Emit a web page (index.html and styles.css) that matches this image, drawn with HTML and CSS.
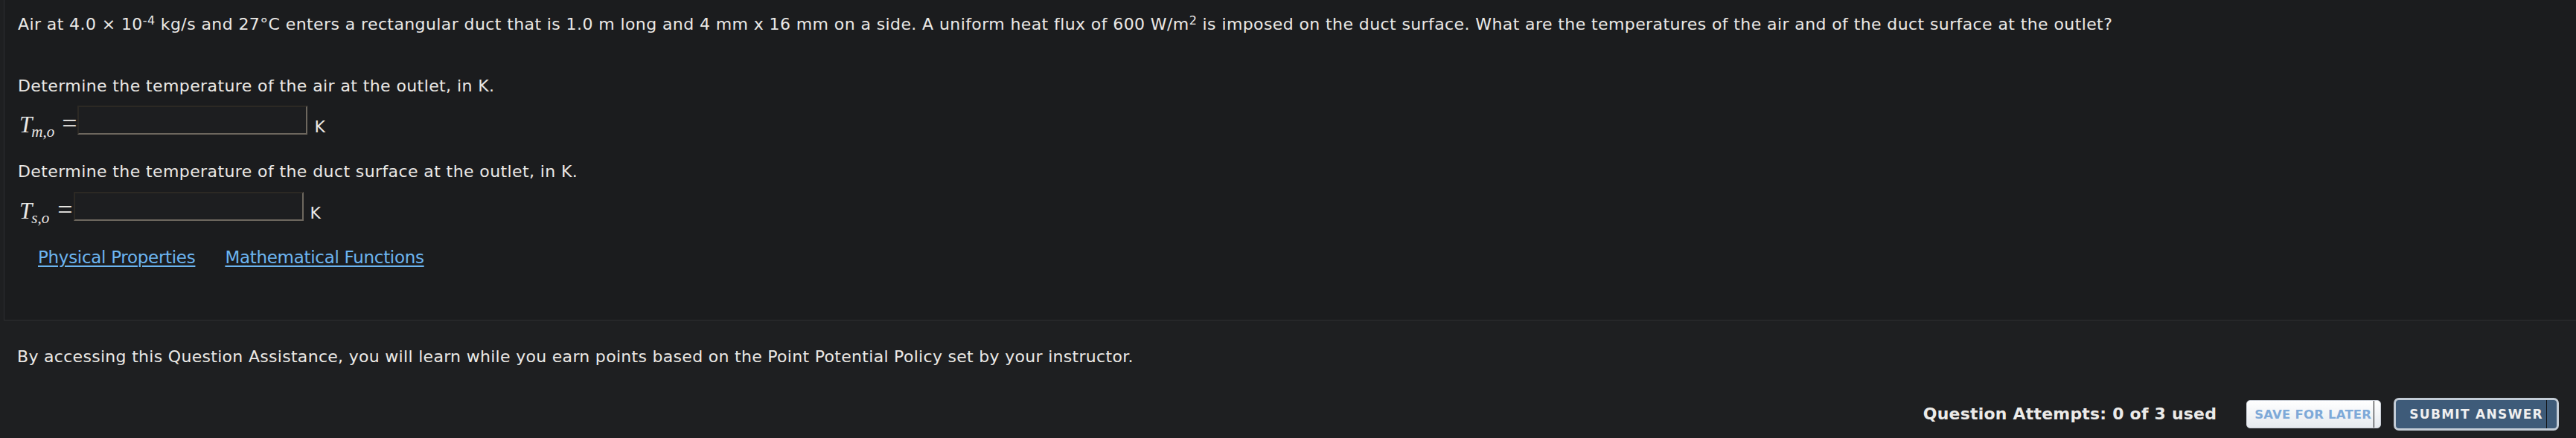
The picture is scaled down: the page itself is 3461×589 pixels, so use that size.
FILE: index.html
```html
<!DOCTYPE html>
<html lang="en">
<head>
<meta charset="utf-8">
<title>Question</title>
<link rel="stylesheet" href="styles.css">
</head>
<body>
<div class="question">
  <p class="stem">Air at 4.0 × 10<sup>-4</sup> kg/s and 27°C enters a rectangular duct that is 1.0 m long and 4 mm x 16 mm on a side. A uniform heat flux of 600 W/m<sup>2</sup> is imposed on the duct surface. What are the temperatures of the air and of the duct surface at the outlet?</p>

  <p class="prompt prompt-first">Determine the temperature of the air at the outlet, in K.</p>
  <div class="answer-row">
    <span class="math"><i class="mi">T</i><sub class="msub">m,o</sub><span class="mo mo-m">=</span></span>
    <input class="answer" type="text" aria-label="T m,o">
    <span class="unit">K</span>
  </div>

  <p class="prompt prompt-second">Determine the temperature of the duct surface at the outlet, in K.</p>
  <div class="answer-row">
    <span class="math"><i class="mi">T</i><sub class="msub">s,o</sub><span class="mo mo-s">=</span></span>
    <input class="answer" type="text" aria-label="T s,o">
    <span class="unit">K</span>
  </div>

  <div class="links">
    <a href="#">Physical Properties</a>
    <a href="#">Mathematical Functions</a>
  </div>
</div>

<p class="assist">By accessing this Question Assistance, you will learn while you earn points based on the Point Potential Policy set by your instructor.</p>

<div class="actions">
  <span class="attempts">Question Attempts: 0 of 3 used</span>
  <button class="btn btn-save" type="button">SAVE FOR LATER</button>
  <button class="btn btn-submit" type="button">SUBMIT ANSWER</button>
</div>
</body>
</html>
```

FILE: styles.css
```css
html, body {
  margin: 0;
  padding: 0;
}

body {
  background: #1e1f21;
  color: #ebe9e6;
  font-family: "DejaVu Sans", Verdana, sans-serif;
  font-size: 22px;
  line-height: 30px;
  letter-spacing: 0.4px;
  height: 589px;
  overflow: hidden;
}

.question {
  margin-left: 5px;
  background: #1b1c1e;
  border-left: 1px solid #2d2e31;
  border-bottom: 1px solid #2d2e31;
  padding: 18px 0 69px 18px;
}

.stem {
  margin: 0;
  white-space: nowrap;
}

sup {
  font-size: 16px;
  line-height: 0;
  vertical-align: 7px;
}

.prompt {
  margin: 0;
}

.prompt-first {
  margin-top: 53px;
}

.prompt-second {
  margin-top: 35px;
}

.answer-row {
  display: flex;
  align-items: flex-end;
  margin-top: 11px;
  height: 39px;
}

.prompt-second + .answer-row {
  margin-top: 12px;
}

.math {
  font-family: "Liberation Serif", "Times New Roman", serif;
  font-size: 31px;
  line-height: 30px;
  letter-spacing: 0;
  margin-left: 2px;
  margin-bottom: -2px;
  white-space: nowrap;
  color: #ebe9e6;
}

.mi {
  font-style: italic;
}

.msub {
  font-style: italic;
  font-size: 21px;
  line-height: 0;
  vertical-align: -6px;
  margin-left: -1px;
}

.mo {
  font-size: 36px;
  line-height: 0;
  margin-left: 10px;
  margin-right: 1px;
}

.mo-s {
  margin-left: 11px;
}

.answer {
  box-sizing: border-box;
  width: 309px;
  height: 39px;
  margin: 0;
  padding: 0 6px;
  background: #1d1e20;
  color: #ebe9e6;
  font: inherit;
  border-style: solid;
  border-width: 2px;
  border-color: #2c2924 #6d675e #6d675e #2c2924;
  outline: none;
}

.unit {
  line-height: 21px;
  margin-left: 9px;
}

.links {
  margin-top: 34px;
  padding-left: 27px;
  display: flex;
  gap: 40px;
  font-size: 23px;
  letter-spacing: -0.3px;
}

.links a {
  color: #6cb4f0;
  text-decoration: underline;
  text-underline-offset: 3px;
}

.assist {
  margin: 34px 0 0 23px;
  white-space: nowrap;
  letter-spacing: 0.3px;
}

.actions {
  display: flex;
  align-items: center;
  justify-content: flex-end;
  margin-top: 40px;
  padding-right: 23px;
  height: 44px;
}

.attempts {
  font-weight: bold;
  font-size: 22px;
  letter-spacing: 0.2px;
  margin-right: 40px;
  color: #ecebe9;
}

.btn {
  box-sizing: border-box;
  display: inline-flex;
  align-items: center;
  margin: 0;
  font-family: "DejaVu Sans", Verdana, sans-serif;
  font-weight: bold;
  cursor: pointer;
}

.btn::after {
  content: "";
  align-self: stretch;
  width: 1px;
  background: #111214;
}

.btn-save {
  height: 38px;
  padding: 0 8px 0 10px;
  font-size: 16.5px;
  letter-spacing: 0.2px;
  background: linear-gradient(#ffffff, #e6eaef);
  border: 1px solid #c9ced6;
  border-radius: 5px;
  color: #7ea9d8;
}

.btn-save::after {
  margin-left: 3px;
}

.btn-submit {
  height: 44px;
  margin-left: 17px;
  padding: 0 13px 0 18px;
  font-size: 17px;
  letter-spacing: 1.3px;
  background: #3e5b79;
  border: 3px solid #c3ccd6;
  border-radius: 7px;
  color: #f0f0f0;
}

.btn-submit::after {
  margin-left: 4px;
}
```
